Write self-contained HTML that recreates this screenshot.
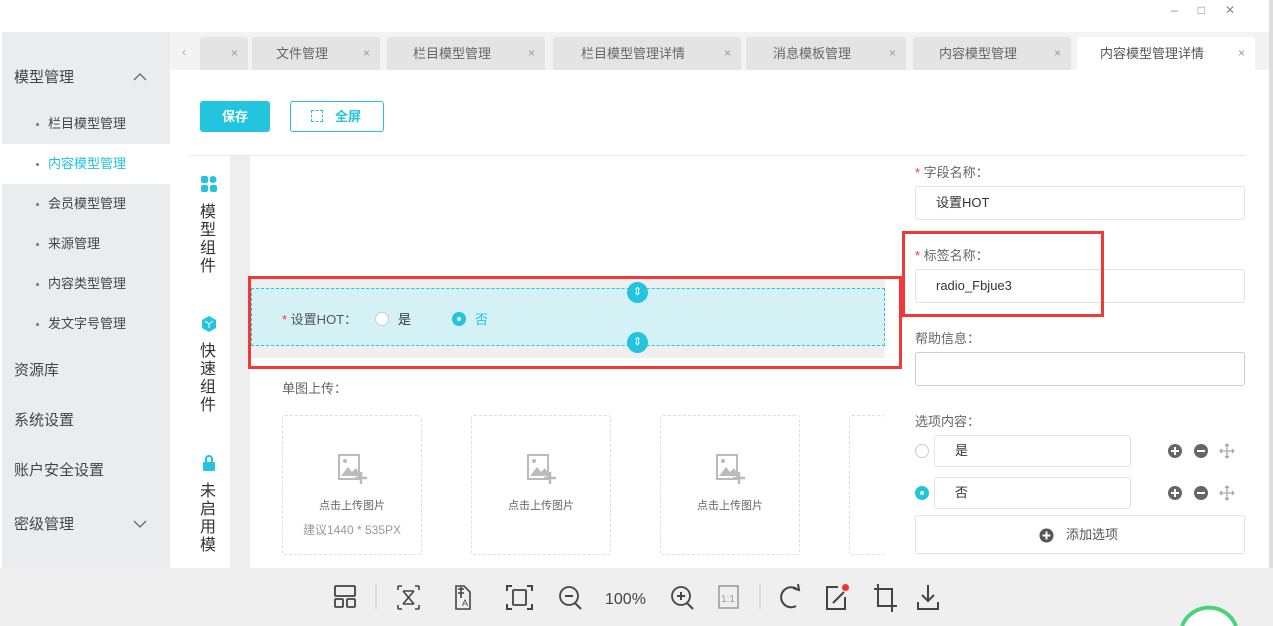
<!DOCTYPE html>
<html style="overflow:hidden;height:626px"><head><meta charset="utf-8"><style>
*{box-sizing:border-box;margin:0;padding:0}
body{width:1273px;height:626px;overflow:hidden;background:#fff;font-family:"Liberation Sans","Noto Sans CJK SC",sans-serif;color:#555;position:relative;font-size:13px}
.a{position:absolute}
.side{left:2px;top:32px;width:168px;height:536px;background:#e9edf0}
.mi{position:absolute;left:14px;font-size:15px;color:#444}
.si{position:absolute;left:0;width:168px;height:40px;line-height:40px;padding-left:46px;font-size:13px;color:#444}
.si:before{content:"";position:absolute;left:34px;top:19px;width:3px;height:3px;background:#777;border-radius:50%}
.tab{position:absolute;top:37px;height:33px;background:#e4e4e4;border-radius:3px 3px 0 0;line-height:33px;font-size:13px;color:#666;text-align:center}
.tab i{position:absolute;right:10px;top:0;font-style:normal;color:#999;font-size:12px}
.inp{position:absolute;border:1px solid #e3e3e3;border-radius:3px;height:34px;line-height:32px;padding-left:20px;color:#333;font-size:13px}
.lbl{position:absolute;font-size:13px;color:#666}
.lbl b{color:#f33;font-weight:normal}
.up{position:absolute;top:415px;width:140px;height:140px;border:1px dashed #ddd;border-radius:3px;text-align:center;font-size:11px;color:#666}
.vt{position:absolute;left:200px;width:20px;font-size:16px;line-height:18px;color:#333}
</style></head><body>
<div class="a" style="right:18px;top:3px;font-size:12px;color:#888;letter-spacing:20px">–□✕</div>
<div class="a side"></div>
<div class="mi" style="top:66px">模型管理</div>
<svg class="a" style="left:133px;top:72px" width="14" height="9"><path d="M1 8L7 2L13 8" stroke="#666" fill="none" stroke-width="1.3"/></svg>
<div class="si" style="top:104px;left:2px">栏目模型管理</div>
<div class="si" style="top:144px;left:2px;background:#fff;color:#22c4dd">内容模型管理</div>
<div class="si" style="top:184px;left:2px">会员模型管理</div>
<div class="si" style="top:224px;left:2px">来源管理</div>
<div class="si" style="top:264px;left:2px">内容类型管理</div>
<div class="si" style="top:304px;left:2px">发文字号管理</div>
<div class="mi" style="top:359px">资源库</div>
<div class="mi" style="top:409px">系统设置</div>
<div class="mi" style="top:459px">账户安全设置</div>
<div class="mi" style="top:513px">密级管理</div>
<svg class="a" style="left:133px;top:520px" width="14" height="9"><path d="M1 1L7 7L13 1" stroke="#666" fill="none" stroke-width="1.3"/></svg>

<div class="a" style="left:170px;top:32px;width:1103px;height:38px;background:#f3f3f3"></div>
<div class="a" style="left:182px;top:45px;color:#aaa;font-size:12px">‹</div>
<div class="tab" style="left:200px;width:48px"><i>×</i></div>
<div class="tab" style="left:252px;width:128px;padding-right:28px">文件管理<i>×</i></div>
<div class="tab" style="left:387px;width:158px;padding-right:28px">栏目模型管理<i>×</i></div>
<div class="tab" style="left:553px;width:188px;padding-right:28px">栏目模型管理详情<i>×</i></div>
<div class="tab" style="left:746px;width:160px;padding-right:28px">消息模板管理<i>×</i></div>
<div class="tab" style="left:913px;width:158px;padding-right:28px">内容模型管理<i>×</i></div>
<div class="tab" style="left:1077px;width:178px;background:#fff;padding-right:28px;color:#555">内容模型管理详情<i>×</i></div>

<div class="a" style="left:200px;top:101px;width:70px;height:31px;background:#22c4de;border-radius:3px;color:#fff;text-align:center;line-height:31px;font-weight:bold">保存</div>
<div class="a" style="left:290px;top:101px;width:94px;height:31px;border:1px solid #22c4de;border-radius:3px;color:#22c4de;line-height:29px;padding-left:44px;font-weight:bold">全屏</div>
<div class="a" style="left:311px;top:110px;width:12px;height:12px;border:1.5px dashed #22c4de"></div>
<div class="a" style="left:190px;top:155px;width:1055px;height:1px;background:#e6e6e6"></div>

<div class="a" style="left:230px;top:156px;width:20px;height:412px;background:#eee"></div>
<svg class="a" style="left:201px;top:176px" width="16" height="16"><rect x="0" y="0" width="7" height="7" rx="2" fill="#22c4de"/><circle cx="12" cy="3.5" r="3.5" fill="#22c4de"/><rect x="0" y="9" width="7" height="7" rx="2" fill="#22c4de"/><rect x="9" y="9" width="7" height="7" rx="2" fill="#22c4de"/></svg>
<div class="vt" style="top:204px">模型组件</div>
<svg class="a" style="left:202px;top:316px" width="14" height="16"><path d="M7 0L14 4V12L7 16L0 12V4Z" fill="#22c4de"/><path d="M3 5L7 8L11 5M7 8V12" stroke="#fff" fill="none"/></svg>
<div class="vt" style="top:343px">快速组件</div>
<svg class="a" style="left:203px;top:455px" width="12" height="16"><path d="M3 7V4a3 3 0 016 0v3" stroke="#22c4de" stroke-width="2" fill="none"/><rect x="0" y="7" width="12" height="9" rx="1" fill="#22c4de"/></svg>
<div class="vt" style="top:483px">未启用模</div>

<div class="a" style="left:250px;top:278px;width:635px;height:80px;background:#efefef"></div>
<div class="a" style="left:251px;top:288px;width:634px;height:58px;background:#d4f2f6;border:1px dashed #22c4de"></div>
<div class="a" style="left:627px;top:282px;width:21px;height:21px;border-radius:50%;background:#22c4de;color:#fff;text-align:center;font-size:11px;line-height:21px">⇕</div>
<div class="a" style="left:627px;top:332px;width:21px;height:21px;border-radius:50%;background:#22c4de;color:#fff;text-align:center;font-size:11px;line-height:21px">⇕</div>
<div class="lbl" style="left:282px;top:309px;color:#555"><b>*</b> 设置HOT：</div>
<div class="a" style="left:375px;top:312px;width:14px;height:14px;border-radius:50%;border:1px solid #ccc;background:#fff"></div>
<div class="a" style="left:398px;top:309px;color:#333">是</div>
<div class="a" style="left:452px;top:312px;width:14px;height:14px;border-radius:50%;background:#22c4de"><div style="margin:5px;width:4px;height:4px;background:#fff;border-radius:50%"></div></div>
<div class="a" style="left:475px;top:309px;color:#22c4de">否</div>
<div class="a" style="left:248px;top:276px;width:654px;height:93px;border:3px solid #f23838"></div>

<div class="lbl" style="left:282px;top:378px">单图上传：</div>
<div class="up" style="left:282px"><svg style="margin-top:38px" width="30" height="30"><rect x="2" y="1" width="20" height="24" fill="none" stroke="#bbb" stroke-width="2"/><path d="M4 22L11 13L15 18L19 14L22 19V22Z" fill="#bbb"/><circle cx="8" cy="7" r="2" fill="#bbb"/><path d="M18 24H30M24 18V30" stroke="#bbb" stroke-width="2.5"/></svg><div style="margin-top:10px">点击上传图片</div><div style="margin-top:8px;color:#999;font-size:12px">建议1440 * 535PX</div></div>
<div class="up" style="left:471px"><svg style="margin-top:38px" width="30" height="30"><rect x="2" y="1" width="20" height="24" fill="none" stroke="#bbb" stroke-width="2"/><path d="M4 22L11 13L15 18L19 14L22 19V22Z" fill="#bbb"/><circle cx="8" cy="7" r="2" fill="#bbb"/><path d="M18 24H30M24 18V30" stroke="#bbb" stroke-width="2.5"/></svg><div style="margin-top:10px">点击上传图片</div></div>
<div class="up" style="left:660px"><svg style="margin-top:38px" width="30" height="30"><rect x="2" y="1" width="20" height="24" fill="none" stroke="#bbb" stroke-width="2"/><path d="M4 22L11 13L15 18L19 14L22 19V22Z" fill="#bbb"/><circle cx="8" cy="7" r="2" fill="#bbb"/><path d="M18 24H30M24 18V30" stroke="#bbb" stroke-width="2.5"/></svg><div style="margin-top:10px">点击上传图片</div></div>
<div class="up" style="left:849px;width:36px;border-right:none"></div>

<div class="lbl" style="left:915px;top:162px"><b>*</b> 字段名称：</div>
<div class="inp" style="left:915px;top:186px;width:330px">设置HOT</div>
<div class="lbl" style="left:915px;top:245px"><b>*</b> 标签名称：</div>
<div class="inp" style="left:915px;top:269px;width:330px">radio_Fbjue3</div>
<div class="a" style="left:902px;top:231px;width:202px;height:86px;border:3px solid #f23838"></div>
<div class="lbl" style="left:915px;top:328px">帮助信息：</div>
<div class="inp" style="left:915px;top:352px;width:330px;border-color:#ccc"></div>
<div class="lbl" style="left:915px;top:411px">选项内容：</div>
<div class="a" style="left:915px;top:444px;width:14px;height:14px;border-radius:50%;border:1px solid #ccc"></div>
<div class="inp" style="left:934px;top:435px;width:197px;height:32px;line-height:30px">是</div>
<div class="a" style="left:915px;top:486px;width:14px;height:14px;border-radius:50%;background:#22c4de"><div style="margin:5px;width:4px;height:4px;background:#fff;border-radius:50%"></div></div>
<div class="inp" style="left:934px;top:477px;width:197px;height:32px;line-height:30px">否</div>
<svg class="a" style="left:1167px;top:443px" width="70" height="60">
<g><circle cx="8" cy="8" r="7" fill="#666"/><path d="M4 8H12M8 4V12" stroke="#fff" stroke-width="2"/><circle cx="34" cy="8" r="7" fill="#666"/><path d="M30 8H38" stroke="#fff" stroke-width="2"/><path d="M60 1V15M53 8H67M58 3L60 1L62 3M58 13L60 15L62 13M55 6L53 8L55 10M65 6L67 8L65 10" stroke="#aaa" fill="none" stroke-width="1.3"/></g>
<g transform="translate(0,42)"><circle cx="8" cy="8" r="7" fill="#666"/><path d="M4 8H12M8 4V12" stroke="#fff" stroke-width="2"/><circle cx="34" cy="8" r="7" fill="#666"/><path d="M30 8H38" stroke="#fff" stroke-width="2"/><path d="M60 1V15M53 8H67M58 3L60 1L62 3M58 13L60 15L62 13M55 6L53 8L55 10M65 6L67 8L65 10" stroke="#aaa" fill="none" stroke-width="1.3"/></g></svg>
<div class="inp" style="left:915px;top:515px;width:330px;height:39px;line-height:37px;padding-left:150px;color:#555">添加选项</div>
<svg class="a" style="left:1039px;top:528px" width="15" height="15"><circle cx="7.5" cy="7.5" r="7" fill="#555"/><path d="M3.5 7.5H11.5M7.5 3.5V11.5" stroke="#fff" stroke-width="2"/></svg>
<div class="a" style="left:1269px;top:0;width:4px;height:568px;background:#ddd"></div>

<div class="a" style="left:0;top:568px;width:1273px;height:58px;background:#efefef"></div>
<svg class="a" style="left:1176px;top:602px" width="66" height="24"><path d="M6 24A29 29 0 0 1 60 24" fill="#fff" stroke="#4bd37b" stroke-width="4"/></svg>
<svg class="a" style="left:330px;top:582px" width="620" height="34" fill="none" stroke="#444" stroke-width="1.8">
<rect x="5" y="4" width="20" height="10" rx="1"/><rect x="5" y="17" width="8" height="8" rx="1"/><rect x="17" y="17" width="8" height="8" rx="1"/>
<path d="M46 2V28" stroke="#ccc" stroke-width="1"/>
<path d="M68 4H72M85 4H89M68 27H72M85 27H89M68 4V8M89 4V8M68 23V27M89 23V27M73 9L84 22M84 9L73 22M73 9H84M73 22H84" stroke-width="1.6"/>
<path d="M126 4H134L140 10V27H126Z M128 7H134M128 11H134M131 5V16" stroke-width="1.6"/><text x="132" y="24" font-size="9" fill="#444" stroke="none" font-family="Liberation Sans">A</text>
<path d="M182 4H177V9M197 4H202V9M182 27H177V22M197 27H202V22" stroke-width="2"/><rect x="183" y="8" width="13" height="15" rx="1"/>
<circle cx="239" cy="14" r="9"/><path d="M245 21L251 27M235 14H243" stroke-width="2"/>
<text x="275" y="22" font-size="16" fill="#444" stroke="none" font-family="Liberation Sans">100%</text>
<circle cx="351" cy="14" r="9"/><path d="M357 21L363 27M347 14H355M351 10V18" stroke-width="2"/>
<rect x="389" y="4" width="19" height="22" stroke="#999" stroke-width="1.5"/><text x="391" y="20" font-size="10" fill="#999" stroke="none" font-family="Liberation Sans">1:1</text>
<path d="M430 2V28" stroke="#ccc" stroke-width="1"/>
<path d="M468 8A10 10 0 1 0 466 24" stroke-width="2"/><path d="M463 6L469 8L468 2" stroke-width="2"/>
<path d="M508 5H497V27H515V15M503 21L514 10" stroke-width="2"/>
<path d="M548 2V24H567M544 7H562V30" stroke-width="2"/>
<path d="M598 3V19M592 13L598 19L604 13M588 20V27H608V20" stroke-width="2"/>
</svg>
<div class="a" style="left:842px;top:584px;width:7px;height:7px;border-radius:50%;background:#e33"></div>
</body></html>
